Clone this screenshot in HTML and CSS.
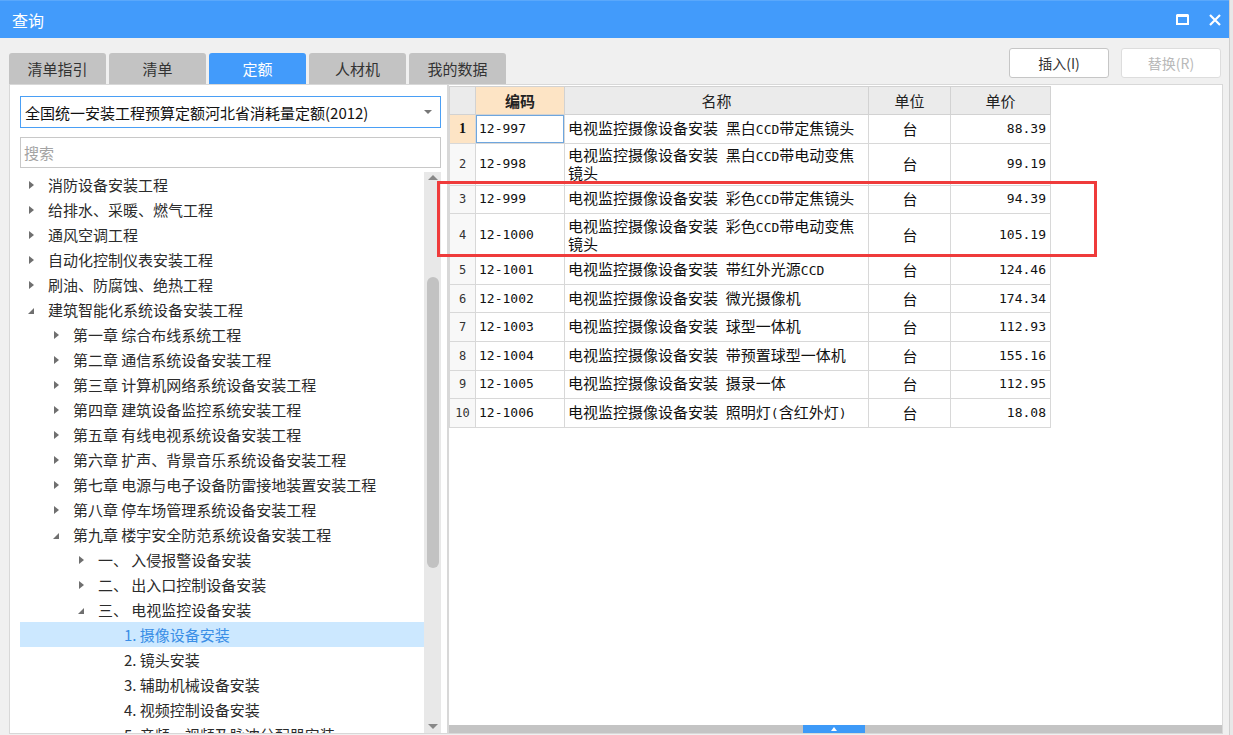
FILE: index.html
```html
<!DOCTYPE html>
<html lang="zh-CN">
<head>
    <meta charset="UTF-8">
    <title>查询</title>
    <link rel="stylesheet" href="styles.css">
</head>
<body>
    <div class="window">
        <div class="titlebar">
            <span class="title">查询</span>
            <div class="win-btns">
                <svg width="13" height="11" viewBox="0 0 13 11"><path d="M1 1.5H12V10H1Z" fill="none" stroke="#fff" stroke-width="2"/><path d="M1 1.5H12" stroke="#fff" stroke-width="3"/></svg>
                <svg width="12" height="12" viewBox="0 0 12 12"><path d="M1 1L11 11M11 1L1 11" stroke="#fff" stroke-width="2.2"/></svg>
            </div>
        </div>

        <div class="toolbar">
            <div class="tabs">
                <div class="tab">清单指引</div>
                <div class="tab">清单</div>
                <div class="tab active">定额</div>
                <div class="tab">人材机</div>
                <div class="tab">我的数据</div>
            </div>
            <div class="actions">
                <button class="btn">插入(I)</button>
                <button class="btn" disabled>替换(R)</button>
            </div>
        </div>

        <div class="panes">
            <div class="left-pane">
                <div class="select">
                    <span>全国统一安装工程预算定额河北省消耗量定额(2012)</span>
                    <span class="caret"></span>
                </div>
                <div class="search">搜索</div>
                <div class="tree-wrap">
                    <ul class="tree">
                        <li class="l0"><span class="tw"><i class="closed"></i></span>消防设备安装工程</li>
                        <li class="l0"><span class="tw"><i class="closed"></i></span>给排水、采暖、燃气工程</li>
                        <li class="l0"><span class="tw"><i class="closed"></i></span>通风空调工程</li>
                        <li class="l0"><span class="tw"><i class="closed"></i></span>自动化控制仪表安装工程</li>
                        <li class="l0"><span class="tw"><i class="closed"></i></span>刷油、防腐蚀、绝热工程</li>
                        <li class="l0"><span class="tw"><i class="open"></i></span>建筑智能化系统设备安装工程</li>
                        <li class="l1"><span class="tw"><i class="closed"></i></span>第一章 综合布线系统工程</li>
                        <li class="l1"><span class="tw"><i class="closed"></i></span>第二章 通信系统设备安装工程</li>
                        <li class="l1"><span class="tw"><i class="closed"></i></span>第三章 计算机网络系统设备安装工程</li>
                        <li class="l1"><span class="tw"><i class="closed"></i></span>第四章 建筑设备监控系统安装工程</li>
                        <li class="l1"><span class="tw"><i class="closed"></i></span>第五章 有线电视系统设备安装工程</li>
                        <li class="l1"><span class="tw"><i class="closed"></i></span>第六章 扩声、背景音乐系统设备安装工程</li>
                        <li class="l1"><span class="tw"><i class="closed"></i></span>第七章 电源与电子设备防雷接地装置安装工程</li>
                        <li class="l1"><span class="tw"><i class="closed"></i></span>第八章 停车场管理系统设备安装工程</li>
                        <li class="l1"><span class="tw"><i class="open"></i></span>第九章 楼宇安全防范系统设备安装工程</li>
                        <li class="l2"><span class="tw"><i class="closed"></i></span>一、 入侵报警设备安装</li>
                        <li class="l2"><span class="tw"><i class="closed"></i></span>二、 出入口控制设备安装</li>
                        <li class="l2"><span class="tw"><i class="open"></i></span>三、 电视监控设备安装</li>
                        <li class="l3 sel"><span class="tw"></span>1. 摄像设备安装</li>
                        <li class="l3"><span class="tw"></span>2. 镜头安装</li>
                        <li class="l3"><span class="tw"></span>3. 辅助机械设备安装</li>
                        <li class="l3"><span class="tw"></span>4. 视频控制设备安装</li>
                        <li class="l3"><span class="tw"></span>5. 音频、视频及脉冲分配器安装</li>
                    </ul>
                    <div class="vscroll">
                        <span class="arr up"></span>
                        <div class="thumb"></div>
                        <span class="fill"></span>
                        <span class="arr down"></span>
                    </div>
                </div>
            </div>

            <div class="right-pane">
                <div class="grid-area">
                    <table class="grid">
                        <colgroup>
                            <col class="c-num"><col class="c-code"><col class="c-name"><col class="c-unit"><col class="c-price">
                        </colgroup>
                        <thead>
                            <tr><th></th><th class="hot">编码</th><th>名称</th><th>单位</th><th>单价</th></tr>
                        </thead>
                        <tbody>
                            <tr><td class="num cur">1</td><td class="code focus">12-997</td><td class="name">电视监控摄像设备安装<span class="lat"> </span>黑白<span class="lat">CCD</span>带定焦镜头</td><td class="unit">台</td><td class="price">88.39</td></tr>
                            <tr class="tall"><td class="num">2</td><td class="code">12-998</td><td class="name">电视监控摄像设备安装<span class="lat"> </span>黑白<span class="lat">CCD</span>带电动变焦镜头</td><td class="unit">台</td><td class="price">99.19</td></tr>
                            <tr><td class="num">3</td><td class="code">12-999</td><td class="name">电视监控摄像设备安装<span class="lat"> </span>彩色<span class="lat">CCD</span>带定焦镜头</td><td class="unit">台</td><td class="price">94.39</td></tr>
                            <tr class="tall"><td class="num">4</td><td class="code">12-1000</td><td class="name">电视监控摄像设备安装<span class="lat"> </span>彩色<span class="lat">CCD</span>带电动变焦镜头</td><td class="unit">台</td><td class="price">105.19</td></tr>
                            <tr><td class="num">5</td><td class="code">12-1001</td><td class="name">电视监控摄像设备安装<span class="lat"> </span>带红外光源<span class="lat">CCD</span></td><td class="unit">台</td><td class="price">124.46</td></tr>
                            <tr><td class="num">6</td><td class="code">12-1002</td><td class="name">电视监控摄像设备安装<span class="lat"> </span>微光摄像机</td><td class="unit">台</td><td class="price">174.34</td></tr>
                            <tr><td class="num">7</td><td class="code">12-1003</td><td class="name">电视监控摄像设备安装<span class="lat"> </span>球型一体机</td><td class="unit">台</td><td class="price">112.93</td></tr>
                            <tr><td class="num">8</td><td class="code">12-1004</td><td class="name">电视监控摄像设备安装<span class="lat"> </span>带预置球型一体机</td><td class="unit">台</td><td class="price">155.16</td></tr>
                            <tr><td class="num">9</td><td class="code">12-1005</td><td class="name">电视监控摄像设备安装<span class="lat"> </span>摄录一体</td><td class="unit">台</td><td class="price">112.95</td></tr>
                            <tr><td class="num">10</td><td class="code">12-1006</td><td class="name">电视监控摄像设备安装<span class="lat"> </span>照明灯<span class="lat">(</span>含红外灯<span class="lat">)</span></td><td class="unit">台</td><td class="price">18.08</td></tr>
                        </tbody>
                    </table>
                </div>
                <div class="hscroll">
                    <div class="hthumb"><span class="tri"></span></div>
                </div>
            </div>
        </div>

        <!-- annotation frame drawn over rows 3-4 -->
        <div class="mark"></div>
    </div>
</body>
</html>
```

FILE: styles.css
```css
* {
    box-sizing: border-box;
}

body {
    margin: 0;
    background-color: #e8e8e8;
    font-family: "Noto Sans CJK SC", "Noto Sans", sans-serif;
    color: #333;
}

.window {
    position: relative;
    width: 1230px;
    height: 735px;
    background-color: #f0f0f0;
    border-right: 1px solid #cfcfcf;
    overflow: hidden;
}

.titlebar {
    height: 38px;
    background-color: #429bfb;
    border-top: 1px solid #5aa8fb;
    display: flex;
    align-items: center;
    justify-content: space-between;
    padding: 0 8px 0 12px;
    color: #fff;
}

.title {
    font-size: 16px;
    line-height: 20px;
}

.win-btns {
    display: flex;
    align-items: center;
    gap: 20px;
}

.win-btns svg {
    display: block;
}

.toolbar {
    height: 46px;
    display: flex;
    justify-content: space-between;
    padding: 0 8px 0 9px;
}

.tabs {
    display: flex;
    gap: 3px;
    align-self: flex-end;
}

.tab {
    width: 97px;
    height: 31px;
    background-color: #c3c3c3;
    border-radius: 3px 3px 0 0;
    font-size: 15px;
    line-height: 31px;
    text-align: center;
    color: #333;
}

.tab.active {
    background-color: #429bfb;
    color: #fff;
}

.actions {
    display: flex;
    gap: 12px;
    margin-top: 10px;
}

.btn {
    width: 100px;
    height: 30px;
    background-color: #fff;
    border: 1px solid #c6c6c6;
    border-radius: 3px;
    font-family: "Noto Sans CJK SC", "Noto Sans", sans-serif;
    font-size: 14px;
    color: #333;
    padding: 0;
}

.btn:disabled {
    color: #b9b9b9;
    border-color: #dddddd;
}

.panes {
    display: flex;
    height: 650px;
    padding-left: 9px;
}

.left-pane {
    width: 439px;
    background-color: #fff;
    border: 1px solid #d8d8d8;
    padding: 11px 6px 0 10px;
    display: flex;
    flex-direction: column;
}

.select {
    height: 32px;
    border: 1px solid #4a9ff5;
    display: flex;
    align-items: center;
    justify-content: space-between;
    padding: 0 8px 0 4px;
    font-size: 15px;
    color: #111;
}

.caret {
    width: 0;
    height: 0;
    border-left: 4px solid transparent;
    border-right: 4px solid transparent;
    border-top: 4px solid #777;
}

.search {
    margin-top: 9px;
    height: 31px;
    border: 1px solid #c8c8c8;
    padding-left: 3px;
    font-size: 15px;
    line-height: 29px;
    color: #a3a3a3;
}

.tree-wrap {
    margin-top: 4px;
    flex: 1;
    display: flex;
    overflow: hidden;
}

.tree {
    flex: 1;
    list-style: none;
    margin: 0;
    padding: 0;
    overflow: hidden;
}

.tree li {
    height: 25px;
    display: flex;
    align-items: center;
    font-size: 15px;
    white-space: nowrap;
    color: #2b2b2b;
}

.tree .l1 { padding-left: 25px; }
.tree .l2 { padding-left: 50px; }
.tree .l3 { padding-left: 76px; }

.tree li.sel {
    background-color: #cce8ff;
    color: #3a8ee6;
}

.tw {
    width: 28px;
    flex: none;
    display: flex;
    align-items: center;
}

.tw .closed {
    margin-left: 9px;
    width: 0;
    height: 0;
    border-left: 5px solid #6f6f6f;
    border-top: 4px solid transparent;
    border-bottom: 4px solid transparent;
}

.tw .open {
    margin-left: 8px;
    margin-top: 2px;
    width: 0;
    height: 0;
    border-bottom: 6px solid #6f6f6f;
    border-left: 6px solid transparent;
}

.vscroll {
    width: 17px;
    flex: none;
    background-color: #e8e8e8;
    display: flex;
    flex-direction: column;
    align-items: center;
    padding: 3px 0 4px;
}

.vscroll .arr {
    width: 0;
    height: 0;
    border-left: 5px solid transparent;
    border-right: 5px solid transparent;
}

.vscroll .up {
    border-bottom: 5px solid #888;
}

.vscroll .down {
    border-top: 5px solid #888;
}

.vscroll .thumb {
    margin-top: 97px;
    width: 12px;
    height: 291px;
    border-radius: 6px;
    background-color: #c2c2c2;
}

.vscroll .fill {
    flex: 1;
}

.right-pane {
    width: 775px;
    background-color: #fff;
    border: 1px solid #d8d8d8;
    display: flex;
    flex-direction: column;
}

.grid-area {
    flex: 1;
    padding-top: 1px;
}

.grid {
    border-collapse: collapse;
    table-layout: fixed;
    width: 601px;
    font-size: 15px;
}

.c-num { width: 26px; }
.c-code { width: 89px; }
.c-name { width: 304px; }
.c-unit { width: 82px; }
.c-price { width: 100px; }

.grid thead tr {
    height: 28px;
}

.grid th {
    background-color: #ebebeb;
    border: 1px solid #d2d2d2;
    font-weight: normal;
    color: #222;
    padding: 0;
}

.grid th.hot {
    background-color: #fde4c5;
    font-weight: bold;
}

.grid tbody tr {
    height: 28.6px;
}

.grid tbody tr.tall {
    height: 42px;
}

.grid td {
    border: 1px solid #d8d8d8;
    padding: 0 2px 0 3px;
    line-height: 16px;
    color: #111;
}

.grid td.num {
    text-align: center;
    padding: 0;
    background-color: #f8f8f8;
    font-family: "DejaVu Sans Mono", monospace;
    font-size: 12px;
    color: #333;
}

.grid td.num.cur {
    background-color: #fde4c5;
    font-family: "Liberation Serif", serif;
    font-weight: bold;
    font-size: 14px;
    color: #111;
}

.grid td.code {
    font-family: "DejaVu Sans Mono", monospace;
    font-size: 13px;
}

.grid td.focus {
    box-shadow: inset 0 0 0 1px #6ea6de;
}

.lat {
    font-family: "DejaVu Sans Mono", monospace;
    font-size: 13px;
}

.grid td.unit {
    text-align: center;
}

.grid td.price {
    text-align: right;
    padding-right: 4px;
    font-family: "DejaVu Sans Mono", monospace;
    font-size: 13px;
}

.hscroll {
    height: 8px;
    background-color: #c4c4c4;
    display: flex;
}

.hthumb {
    margin-left: 354px;
    width: 62px;
    background-color: #3d9af8;
    display: flex;
    align-items: center;
    justify-content: center;
}

.hthumb .tri {
    width: 0;
    height: 0;
    border-left: 3px solid transparent;
    border-right: 3px solid transparent;
    border-bottom: 4px solid #fff;
}

.mark {
    position: absolute;
    left: 437px;
    top: 181px;
    width: 660px;
    height: 76px;
    border: 3px solid #ef3b3b;
}
```
